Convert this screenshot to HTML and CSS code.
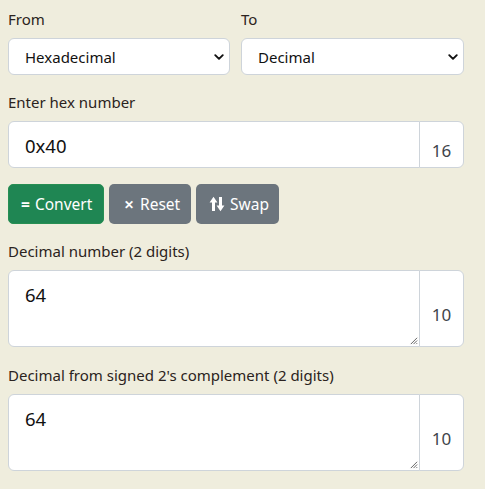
FILE: index.html
```html
<!DOCTYPE html>
<html>
<head>
<meta charset="utf-8">
<link rel="stylesheet" href="styles.css">
</head>
<body>
<div class="wrap">
  <div class="row2">
    <div class="col">
      <label class="lbl">From</label>
      <div class="select">
        <span>Hexadecimal</span>
        <svg class="chev" viewBox="0 0 16 16" width="10" height="10"><path d="M2 5l6 6 6-6" fill="none" stroke="#111" stroke-width="3" stroke-linecap="round" stroke-linejoin="round"/></svg>
      </div>
    </div>
    <div class="col">
      <label class="lbl">To</label>
      <div class="select">
        <span>Decimal</span>
        <svg class="chev" viewBox="0 0 16 16" width="10" height="10"><path d="M2 5l6 6 6-6" fill="none" stroke="#111" stroke-width="3" stroke-linecap="round" stroke-linejoin="round"/></svg>
      </div>
    </div>
  </div>

  <label class="lbl">Enter hex number</label>
  <div class="group g-input">
    <div class="field">0x40</div>
    <div class="addon">16</div>
  </div>

  <div class="btns">
    <button class="btn green"><span class="ico">=</span> Convert</button>
    <button class="btn gray"><span class="ico x">&#x2715;</span> Reset</button>
    <button class="btn gray"><svg class="swap" viewBox="0 0 16 16" width="16" height="16"><path d="M4.5 15V6M11.5 1v9" stroke="#fff" stroke-width="3"/><path d="M4.5 0.8L0.6 6.5H8.4Z M11.5 15.2L7.6 9.5H15.4Z" fill="#fff"/></svg> Swap</button>
  </div>

  <label class="lbl">Decimal number (2 digits)</label>
  <div class="group g-area">
    <div class="field area">64<svg class="grip" viewBox="0 0 10 10" width="9" height="9"><path d="M9 2L2 9M9 5L5 9M9 8L8 9" stroke="#555" stroke-width="1"/></svg></div>
    <div class="addon">10</div>
  </div>

  <label class="lbl">Decimal from signed 2's complement (2 digits)</label>
  <div class="group g-area last">
    <div class="field area">64<svg class="grip" viewBox="0 0 10 10" width="9" height="9"><path d="M9 2L2 9M9 5L5 9M9 8L8 9" stroke="#555" stroke-width="1"/></svg></div>
    <div class="addon">10</div>
  </div>
</div>
</body>
</html>
```

FILE: styles.css
```css
html, body {
  margin: 0;
  background: #efeddd;
}
body {
  padding: 9px 8px 8px;
  font-family: "Noto Sans", "Open Sans", sans-serif;
  color: #2a1f1a;
}
.wrap {
  width: 456px;
  display: flex;
  flex-direction: column;
}
.row2 {
  display: grid;
  grid-template-columns: 222px 223px;
  column-gap: 11px;
}
.col {
  display: flex;
  flex-direction: column;
}
.lbl {
  font-size: 15px;
  line-height: 20px;
  height: 20px;
  margin: 0 0 9px;
  color: #2b2320;
}
.select {
  height: 37px;
  box-sizing: border-box;
  border: 1px solid #ced4da;
  border-radius: 6px;
  background: #fff;
  display: flex;
  align-items: center;
  justify-content: space-between;
  padding: 0 5px 0 16px;
  font-size: 15px;
  color: #111;
  margin-bottom: 17px;
}
.chev { margin-top: 1px; }
.group {
  display: flex;
}
.field {
  flex: 1;
  background: #fff;
  border: 1px solid #ced4da;
  border-radius: 6px 0 0 6px;
  box-sizing: border-box;
  font-size: 18.5px;
  color: #111;
  padding: 0 16px;
  position: relative;
}
.g-input { height: 47px; margin-bottom: 16px; }
.g-input .field { display: flex; align-items: center; padding-top: 1px; }
.g-area { height: 77px; margin-bottom: 18px; }
.g-area .field { padding-top: 10px; line-height: 28px; }
.grip { position: absolute; right: 1px; bottom: 1px; }
.addon {
  width: 45px;
  box-sizing: border-box;
  background: #fff;
  border: 1px solid #ced4da;
  margin-left: -1px;
  border-radius: 0 6px 6px 0;
  display: flex;
  align-items: center;
  justify-content: center;
  padding-top: 12px;
  font-size: 17px;
  color: #40444a;
}
.btns {
  display: flex;
  gap: 5px;
  margin-bottom: 17px;
}
.btn {
  height: 40px;
  border-radius: 5px;
  border: 1px solid transparent;
  color: #fff;
  font-family: inherit;
  font-size: 15.5px;
  padding: 0 12px;
  display: flex;
  align-items: center;
  gap: 5px;
}
.green { background: #1f8653; border-color: #278f53; width: 96px; }
.gray { background: #6c757d; }
.btn.gray:nth-child(2) { width: 82px; padding-left: 14px; gap: 6px; }
.btn.gray:nth-child(3) { width: 83px; }
.swap { flex: none; }
.ico { font-weight: 700; }
.ico.x { font-size: 12px; font-weight: 900; }
```
